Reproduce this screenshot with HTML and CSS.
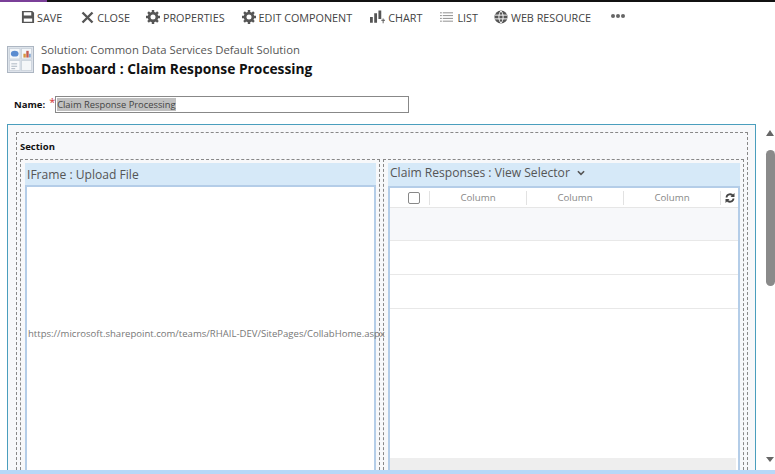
FILE: index.html
```html
<!DOCTYPE html>
<html lang="en">
<head>
    <meta charset="UTF-8">
    <meta name="viewport" content="width=device-width, initial-scale=1.0">
    <title>Dashboard : Claim Response Processing</title>
    <link rel="stylesheet" href="styles.css">
</head>
<body>
    <div class="topline"><div class="topline-accent"></div></div>

    <div class="toolbar">
        <div class="tool tool-save">
            <svg width="14" height="14" viewBox="0 0 15 15"><path fill="#555" fill-rule="evenodd" d="M1 1h11l2 2v11H1zM3 2.500V6h8V2.500zM3 9v3.500h9V9z"/></svg>
            SAVE
        </div>
        <div class="tool tool-close">
            <svg width="13" height="13" viewBox="0 0 13 13"><path stroke="#555" stroke-width="2.400" d="M1.500 1.500l10 10M11.500 1.500l-10 10"/></svg>
            CLOSE
        </div>
        <div class="tool tool-props">
            <svg width="14" height="14" viewBox="0 0 15 15"><circle cx="7.500" cy="7.500" r="4.200" fill="none" stroke="#555" stroke-width="3"/><path stroke="#555" stroke-width="2.600" d="M7.500 0v15M0 7.500h15M2.200 2.200l10.600 10.600M12.800 2.200L2.200 12.800" stroke-dasharray="2.600 9.800"/></svg>
            PROPERTIES
        </div>
        <div class="tool tool-edit">
            <svg width="14" height="14" viewBox="0 0 15 15"><circle cx="7.500" cy="7.500" r="4.200" fill="none" stroke="#555" stroke-width="3"/><path stroke="#555" stroke-width="2.600" d="M7.500 0v15M0 7.500h15M2.200 2.200l10.600 10.600M12.800 2.200L2.200 12.800" stroke-dasharray="2.600 9.800"/></svg>
            EDIT COMPONENT
        </div>
        <div class="tool tool-chart">
            <svg width="15" height="15" viewBox="0 0 16 15"><path fill="#555" d="M0 7h3v6H0zM4.500 3h3v10h-3zM9 0h3v9H9zM12 10h1.500V8.500h1V10H16v1h-1.500v2.500h-1V11H12z"/></svg>
            CHART
        </div>
        <div class="tool tool-list">
            <svg width="13" height="12" viewBox="0 0 14 12"><path stroke="#888" d="M0 1.500h2M3 1.500h11M0 4.500h2M3 4.500h11M0 7.500h2M3 7.500h11M0 10.500h2M3 10.500h11"/></svg>
            LIST
        </div>
        <div class="tool tool-web">
            <svg width="14" height="14" viewBox="0 0 15 15"><circle cx="7.500" cy="7.500" r="7" fill="#555"/><path stroke="#fff" fill="none" d="M1 5.500h13M1 9.500h13M7.500 1C4.500 4 4.500 11 7.500 14M7.500 1c3 3 3 10 0 13"/></svg>
            WEB RESOURCE
        </div>
        <div class="tool-more"><span></span><span></span><span></span></div>
    </div>

    <div class="heading">
        <svg class="heading-icon" width="27" height="27" viewBox="0 0 28 28">
            <rect x="0.500" y="0.500" width="27" height="27" fill="#dfe5ec" stroke="#aab4c0"/>
            <rect x="2.500" y="2.500" width="11" height="11" fill="#f4f7fa" stroke="#ccd3dc"/>
            <rect x="15" y="2.500" width="10.500" height="11" fill="#f4f7fa" stroke="#ccd3dc"/>
            <rect x="2.500" y="15" width="11" height="10.500" fill="#f8f9fb" stroke="#ccd3dc"/>
            <rect x="15" y="15" width="10.500" height="10.500" fill="#f4f6f8" stroke="#ccd3dc"/>
            <ellipse cx="8" cy="8" rx="4" ry="3" fill="#5a8cd0"/>
            <path fill="#d8963c" d="M17 12V8h2.500v4z"/><path fill="#c45a50" d="M20 12V5h2.500v7z"/><path fill="#6a94c8" d="M23 12V8h1.500v4z"/>
            <path stroke="#aab4c0" d="M4.500 18.500h6M4.500 21h6M4.500 23.500h4"/>
        </svg>
        <div>
            <div class="solution">Solution: Common Data Services Default Solution</div>
            <h1 class="title">Dashboard : Claim Response Processing</h1>
        </div>
    </div>

    <div class="name-row">
        <label class="name-label">Name:</label>
        <span class="req">*</span>
        <div class="name-input"><span class="name-sel">Claim Response Processing</span></div>
    </div>

    <div class="workspace">
        <div class="form-area">
            <div class="section">
                <div class="section-title">Section</div>
                <div class="columns">
                    <div class="cell cell-left">
                        <div class="cell-inner">
                            <div class="cell-head">IFrame : Upload File</div>
                            <div class="iframe-body">
                                <span class="iframe-url">https://microsoft.sharepoint.com/teams/RHAIL-DEV/SitePages/CollabHome.aspx</span>
                            </div>
                        </div>
                    </div>
                    <div class="cell cell-right">
                        <div class="cell-inner">
                            <div class="cell-head cell-head-view">
                                Claim Responses : View Selector
                                <svg width="8" height="6" viewBox="0 0 9 6"><path fill="none" stroke="#555" stroke-width="1.800" d="M1 1l3.500 3.500L8 1"/></svg>
                            </div>
                            <div class="grid-body">
                                <div class="grid-header">
                                    <div class="grid-check"><span class="checkbox"></span></div>
                                    <div class="grid-col">Column</div>
                                    <div class="grid-col">Column</div>
                                    <div class="grid-col">Column</div>
                                    <div class="grid-refresh">
                                        <svg width="10" height="10" viewBox="0 0 10 10"><path fill="none" stroke="#444" stroke-width="1.800" d="M1.500 4.500A3.500 3.500 0 0 1 8 3M8.500 5.500A3.500 3.500 0 0 1 2 7"/><path fill="#444" d="M9.500 0v4h-4zM.5 10V6h4z"/></svg>
                                    </div>
                                </div>
                                <div class="grid-row grid-row-first"></div>
                                <div class="grid-row"></div>
                                <div class="grid-row"></div>
                                <div class="grid-fill"></div>
                                <div class="grid-foot"></div>
                            </div>
                        </div>
                    </div>
                </div>
            </div>
        </div>
        <div class="scrollbar">
            <div class="arrow-up"></div>
            <div class="thumb"></div>
            <div class="arrow-down"></div>
        </div>
    </div>
    <div class="bottom-strip"></div>
</body>
</html>
```
FILE: styles.css
```css
html, body {
    height: 100%;
}
body {
    margin: 0;
    width: 775px;
    height: 474px;
    overflow: hidden;
    display: flex;
    flex-direction: column;
    background-color: #fff;
    font-family: "Open Sans", "Noto Sans", Arial, sans-serif;
    color: #444;
}
.topline {
    height: 2px;
    flex: none;
    background-color: #111;
}
.topline-accent {
    width: 47px;
    height: 2px;
    background-color: #7a3f98;
}
.toolbar {
    height: 30px;
    flex: none;
    display: flex;
    align-items: center;
    padding-left: 21px;
    font-size: 10.800px;
    color: #444;
}
.tool {
    display: flex;
    align-items: center;
    gap: 3px;
    white-space: nowrap;
}
.tool-save { gap: 2px; }
.tool-close { margin-left: 19px; }
.tool-props { margin-left: 16px; }
.tool-edit { margin-left: 17px; }
.tool-chart { margin-left: 18px; }
.tool-list { margin-left: 18px; gap: 4px; }
.tool-web { margin-left: 16px; }
.tool-more {
    margin-left: 20px;
    margin-top: -2px;
    display: flex;
    gap: 1px;
}
.tool-more span {
    width: 4px;
    height: 4px;
    border-radius: 50%;
    background-color: #666;
}
.heading {
    flex: none;
    height: 34px;
    margin-top: 10px;
    padding-left: 7px;
    display: flex;
    gap: 7px;
}
.heading-icon {
    margin-top: 4px;
}
.solution {
    font-size: 11.300px;
    line-height: 15px;
    color: #555;
}
.title {
    margin: 3px 0 0;
    font-size: 13.800px;
    line-height: 18px;
    font-weight: 700;
    color: #111;
}
.name-row {
    flex: none;
    height: 17px;
    margin-top: 20px;
    padding-left: 14px;
    display: flex;
    align-items: center;
}
.name-label {
    font-size: 9.500px;
    font-weight: 700;
    color: #111;
}
.req {
    margin-left: 4px;
    width: 6px;
    font-size: 11px;
    line-height: 11px;
    color: #d03030;
    align-self: flex-start;
}
.name-input {
    width: 354px;
    height: 17px;
    box-sizing: border-box;
    border: 1px solid #888;
    padding: 1px;
    display: flex;
    align-items: center;
}
.name-sel {
    background-color: #c0c0c0;
    font-size: 9.350px;
    line-height: 13px;
    color: #444;
}
.workspace {
    flex: 1;
    min-height: 0;
    margin-top: 11px;
    padding-left: 7px;
    display: flex;
}
.form-area {
    width: 749px;
    flex: none;
    box-sizing: border-box;
    border: 1px solid #4a9ebd;
    border-bottom: none;
    background-color: #f7f8fa;
    padding: 7px 7px 0 8px;
}
.section {
    height: 100%;
    box-sizing: border-box;
    border: 1px dashed #888;
    border-bottom: none;
    padding: 0 3px;
    display: flex;
    flex-direction: column;
}
.section-title {
    flex: none;
    height: 26px;
    padding-top: 7px;
    box-sizing: border-box;
    font-size: 9.500px;
    line-height: 14px;
    font-weight: 700;
    color: #111;
}
.columns {
    flex: 1;
    min-height: 0;
    display: flex;
    gap: 3px;
}
.cell {
    box-sizing: border-box;
    border: 1px dashed #888;
    border-bottom: none;
    padding: 3px 3px 0 4px;
}
.cell-left {
    width: 360px;
}
.cell-right {
    width: 361px;
}
.cell-inner {
    height: 100%;
    display: flex;
    flex-direction: column;
}
.cell-head {
    flex: none;
    height: 22px;
    box-sizing: border-box;
    padding: 2px 0 0 2px;
    background-color: #d6e9f8;
    font-size: 12.100px;
    line-height: 20px;
    color: #555;
    white-space: nowrap;
}
.cell-head-view {
    height: 23px;
    padding: 0 0 3px 2px;
    display: flex;
    align-items: center;
    gap: 7px;
}
.iframe-body {
    flex: 1;
    min-height: 0;
    border: 2px solid #b4cde8;
    border-bottom: none;
    background-color: #fff;
    padding-top: 10px;
    display: flex;
    align-items: center;
}
.iframe-url {
    font-size: 9.550px;
    color: #777;
    white-space: nowrap;
    padding-left: 1px;
}
.grid-body {
    flex: 1;
    min-height: 0;
    border: 2px solid #b4cde8;
    border-bottom: none;
    background-color: #fff;
    display: flex;
    flex-direction: column;
}
.grid-header {
    flex: none;
    height: 20px;
    box-sizing: border-box;
    display: flex;
    align-items: center;
    background-color: #fff;
    border-bottom: 1px solid #e6e6e6;
}
.grid-check {
    width: 40px;
    padding-left: 18px;
    box-sizing: border-box;
    height: 14px;
    display: flex;
    align-items: center;
    border-right: 1px solid #e2e2e2;
}
.checkbox {
    width: 12px;
    height: 12px;
    box-sizing: border-box;
    border: 1px solid #888;
    border-radius: 2px;
}
.grid-col {
    width: 97px;
    height: 14px;
    line-height: 14px;
    box-sizing: border-box;
    border-right: 1px solid #e2e2e2;
    text-align: center;
    font-size: 9.700px;
    color: #888;
}
.grid-refresh {
    flex: 1;
    height: 14px;
    padding-left: 4px;
    display: flex;
    align-items: center;
}
.grid-row {
    flex: none;
    height: 34px;
    box-sizing: border-box;
    border-bottom: 1px solid #e8e8e8;
}
.grid-row-first {
    height: 33px;
    background-color: #f7f8fa;
}
.grid-fill {
    flex: 1;
    background-color: #fff;
}
.grid-foot {
    flex: none;
    height: 12px;
    margin-right: 2px;
    background-color: #eeeeee;
}
.scrollbar {
    flex: 1;
    position: relative;
}
.arrow-up, .arrow-down {
    position: absolute;
    left: 10px;
    width: 0;
    height: 0;
    border-left: 4px solid transparent;
    border-right: 4px solid transparent;
}
.arrow-up {
    top: 6px;
    border-bottom: 6px solid #666;
}
.arrow-down {
    bottom: 8px;
    border-top: 5px solid #666;
}
.thumb {
    position: absolute;
    left: 10px;
    top: 26px;
    width: 9px;
    height: 136px;
    border-radius: 5px;
    background-color: #8a8a8a;
}
.bottom-strip {
    flex: none;
    height: 4px;
    background-color: #b8d8f8;
}
```
